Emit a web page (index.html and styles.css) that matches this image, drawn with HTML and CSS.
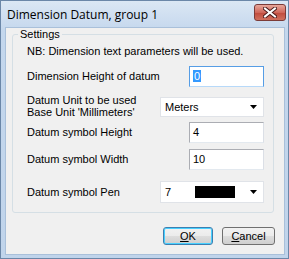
FILE: index.html
```html
<!DOCTYPE html>
<html lang="en">
<head>
    <meta charset="UTF-8">
    <title>Dimension Datum, group 1</title>
    <link rel="stylesheet" href="styles.css">
</head>
<body>

    <div class="window">
        <div class="titlebar">
            <span class="title">Dimension Datum, group 1</span>
            <div class="close-btn">
                <svg width="14" height="11" viewBox="0 0 14 11">
                    <path d="M2 1.5 L12 9.5 M12 1.5 L2 9.5" stroke="#4a1a1a" stroke-width="4" stroke-linecap="square"/>
                    <path d="M2 1.5 L12 9.5 M12 1.5 L2 9.5" stroke="#ffffff" stroke-width="2" stroke-linecap="square"/>
                </svg>
            </div>
        </div>

        <div class="client">
            <fieldset class="settings">
                <legend>Settings</legend>
                <p class="note">NB: Dimension text parameters will be used.</p>

                <div class="row row-datum">
                    <label>Dimension Height of datum</label>
                    <div class="edit focused"><span class="sel">0</span></div>
                </div>

                <div class="row row-unit">
                    <label>Datum Unit to be used<br>Base Unit 'Millimeters'</label>
                    <div class="combo">
                        <span>Meters</span>
                        <svg class="arrow" width="7" height="4" viewBox="0 0 7 4"><path d="M0 0 H7 L3.5 4 Z" fill="#000"/></svg>
                    </div>
                </div>

                <div class="row row-sym">
                    <label>Datum symbol Height</label>
                    <div class="edit">4</div>
                </div>

                <div class="row row-width">
                    <label>Datum symbol Width</label>
                    <div class="edit">10</div>
                </div>

                <div class="row row-pen">
                    <label>Datum symbol Pen</label>
                    <div class="combo pen">
                        <span class="pen-no">7</span>
                        <span class="swatch"></span>
                        <svg class="arrow" width="7" height="4" viewBox="0 0 7 4"><path d="M0 0 H7 L3.5 4 Z" fill="#000"/></svg>
                    </div>
                </div>
            </fieldset>

            <div class="buttons">
                <button type="button" class="btn btn-ok"><u>O</u>K</button>
                <button type="button" class="btn btn-cancel"><u>C</u>ancel</button>
            </div>
        </div>
    </div>

</body>
</html>
```

FILE: styles.css
```css
body {
    margin: 0;
    font-family: "Liberation Sans", Arial, sans-serif;
    font-size: 11px;
    color: #000;
}
.window {
    width: 289px;
    height: 259px;
    box-sizing: border-box;
    border: 1px solid #6b87a8;
    background: linear-gradient(#dbe7f4, #c4d7ed 30px, #c0d4eb);
    display: flex;
    flex-direction: column;
}
.titlebar {
    height: 26px;
    display: flex;
    justify-content: space-between;
    align-items: flex-start;
    padding-left: 6px;
}
.title {
    font-family: "Open Sans", "Liberation Sans", sans-serif;
    font-size: 12px;
    line-height: 16px;
    margin-top: 6px;
}
.close-btn {
    width: 32px;
    height: 17px;
    box-sizing: border-box;
    margin: 3px 2px 0 0;
    border: 1px solid #7b3b38;
    border-radius: 3px;
    background: linear-gradient(#e8a79b, #d0675a 50%, #c04a3c 51%, #d0705e);
    display: flex;
    align-items: center;
    justify-content: center;
}
.client {
    flex: 1;
    margin: 0 3px 3px 4px;
    border: 1px solid #a9c0da;
    background: #f0f0f0;
}
.settings {
    margin: 0 10px 0 6px;
    padding: 4px 9px 9px 14px;
    border: 1px solid #d5dfe5;
    border-radius: 3px;
}
.settings legend {
    padding: 0 2px;
    margin-left: -9px;
    line-height: 13px;
}
.note {
    margin: 0;
    line-height: 13px;
}
.row {
    display: flex;
    justify-content: space-between;
    align-items: center;
}
.row label {
    line-height: 13px;
}
.row-datum {
    margin-top: 8px;
}
.row-unit {
    margin-top: 7px;
    align-items: flex-start;
}
.row-unit label {
    line-height: 12px;
}
.row-unit .combo {
    margin-top: 3px;
}
.row-sym {
    margin-top: 4px;
}
.row-width {
    margin-top: 6px;
}
.row-pen {
    margin-top: 11px;
}
.edit {
    width: 75px;
    height: 21px;
    box-sizing: border-box;
    border: 1px solid #abadb3;
    border-bottom-color: #e3e9ef;
    border-right-color: #dbdfe6;
    background: #fff;
    padding-left: 3px;
    line-height: 19px;
}
.edit.focused {
    border-color: #569de5;
    border-bottom-color: #b7d9f9;
}
.sel {
    background: #3399ff;
    color: #fff;
    padding: 0 1px;
}
.combo {
    width: 104px;
    height: 20px;
    box-sizing: border-box;
    border: 1px solid #e0e3e8;
    background: #fff;
    display: flex;
    align-items: center;
    padding: 0 6px 0 4px;
}
.combo .arrow {
    margin-left: auto;
}
.combo.pen {
    height: 22px;
}
.pen-no {
    width: 30px;
}
.swatch {
    width: 40px;
    height: 12px;
    background: #000;
}
.buttons {
    display: flex;
    justify-content: flex-end;
    gap: 9px;
    margin-top: 14px;
    padding-right: 9px;
}
.btn {
    height: 18px;
    padding: 0;
    font-family: inherit;
    font-size: 11px;
    color: #000;
    border: 1px solid #707070;
    border-radius: 3px;
    background: linear-gradient(#f2f2f2, #ebebeb 50%, #dddddd 51%, #cfcfcf);
}
.btn-ok {
    width: 50px;
    border-color: #3c7fb1;
    box-shadow: inset 0 0 0 1px #48d0ff;
}
.btn-cancel {
    width: 53px;
}
```
